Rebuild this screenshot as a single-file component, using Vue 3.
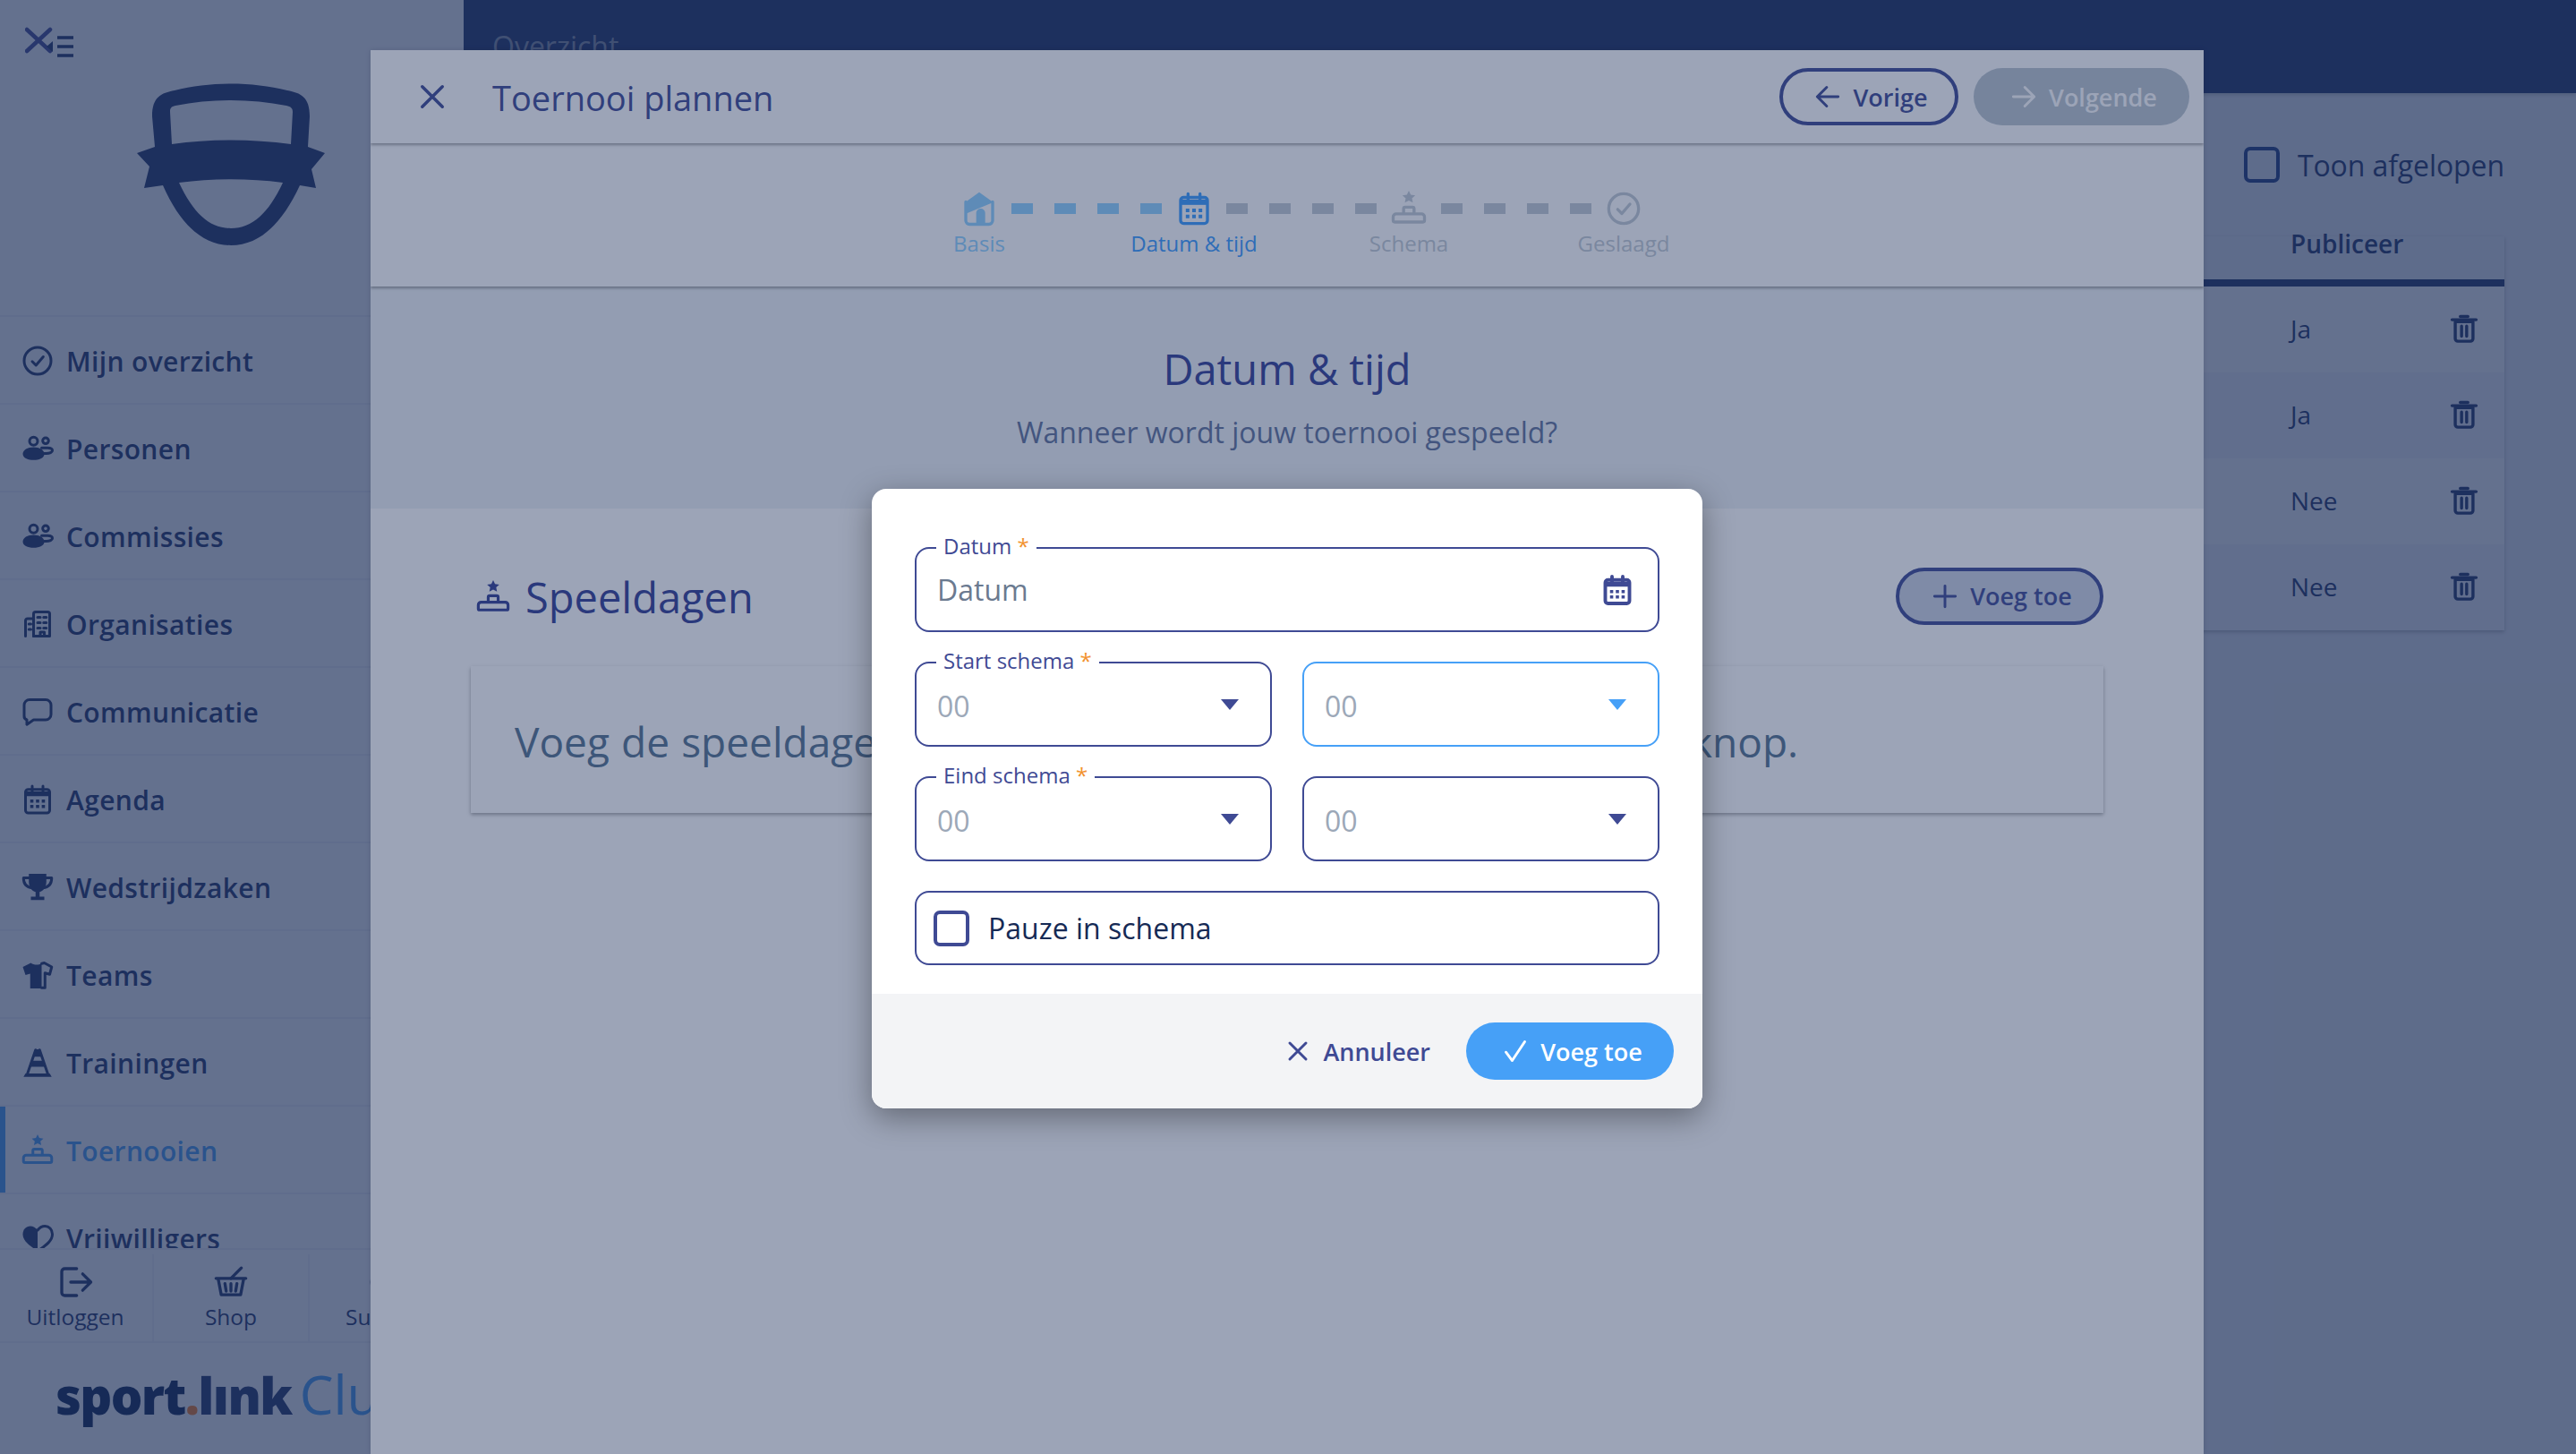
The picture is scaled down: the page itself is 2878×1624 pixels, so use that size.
<template>
  <div class="page">
    <aside class="sidebar">
      <svg class="toggle" viewBox="0 0 60 40" width="60" height="40">
        <path d="M2 3l26 24M2 27L28 3" stroke="#3f4a94" stroke-width="4.5" stroke-linecap="round" fill="none" />
        <path d="M24 22l7-6v12z" fill="#1e3167" />
        <path d="M36 12h18M36 22h18M36 32h18" stroke="#1e3167" stroke-width="3.5" fill="none" />
      </svg>
      <svg class="shield" viewBox="153 93 210 181" width="210" height="181">
        <path
          fill="#1e3167"
          fill-rule="evenodd"
          d="M170 130C170 108 180 104 195 101C235 91 281 91 321 101C336 104 346 108 346 130L344 164L363 171L348 189L353 210L335 207C315 250 290 274 258 274C226 274 201 250 182 207L161 210L167 186L153 171L173 164ZM196 118C191 119 190 121 190 125L192 161C235 155 281 155 325 161L327 125C327 121 325 119 320 118C280 110 236 110 196 118ZM200 204C216 238 234 255 258 255C282 255 300 238 316 204C278 199 238 199 200 204Z"
        />
      </svg>
      <nav class="nav">
        <a v-for="item in navItems" :key="item.label" class="nav-item" :class="{ active: item.active }">
          <Ico :name="item.icon" class="nav-icon" />
          <span>{{ item.label }}</span>
        </a>
      </nav>
      <div class="quick">
        <div v-for="q in quickLinks" :key="q.label" class="quick-cell">
          <Ico :name="q.icon" class="quick-icon" />
          <span>{{ q.label }}</span>
        </div>
      </div>
      <div class="brand">
        <span class="brand-sport">sport</span><span class="brand-dot">.</span><span class="brand-link">lınk</span>
        <span class="brand-club">Club</span>
      </div>
    </aside>

    <main class="main">
      <header class="topbar">Overzicht</header>
      <div class="toolbar">
        <span class="box"></span>
        <span>Toon afgelopen</span>
      </div>
      <div class="table">
        <div class="thead">
          <span>Publiceer</span>
        </div>
        <div v-for="(row, i) in rows" :key="i" class="row">
          <span>{{ row }}</span>
          <Ico name="trash" class="trash" />
        </div>
      </div>
    </main>

    <div class="scrim drawer-wrap">
      <section class="drawer">
        <div class="d-head">
          <Ico name="close" class="d-close" />
          <h1>Toernooi plannen</h1>
          <div class="d-actions">
            <button class="pill outline"><Ico name="left" class="pill-icon" />Vorige</button>
            <button class="pill disabled"><Ico name="right" class="pill-icon" />Volgende</button>
          </div>
        </div>

        <div class="stepper">
          <div class="step-icons">
            <template v-for="(cell, i) in stepCells" :key="i">
              <div class="cell" :class="cell.state">
                <Ico v-if="cell.icon" :name="cell.icon" class="step-icon" />
                <i v-else class="dash"></i>
              </div>
            </template>
          </div>
          <div class="step-labels">
            <span v-for="s in steps" :key="s.label" :class="s.state">{{ s.label }}</span>
          </div>
        </div>

        <div class="intro">
          <h2>Datum &amp; tijd</h2>
          <p>Wanneer wordt jouw toernooi gespeeld?</p>
        </div>

        <div class="content">
          <div class="content-head">
            <h3><Ico name="podium" class="h-icon" />Speeldagen</h3>
            <button class="pill outline tinted"><Ico name="plus" class="pill-icon" />Voeg toe</button>
          </div>
          <div class="empty">Voeg de speeldagen toe door gebruik te maken van de 'plus' knop.</div>
        </div>
      </section>
    </div>

    <div class="scrim modal-wrap">
      <form class="modal" @submit.prevent>
        <div class="modal-body">
          <div class="field">
            <label>Datum <em>*</em></label>
            <span class="placeholder">Datum</span>
            <Ico name="calendar" class="cal" />
          </div>
          <div class="two">
            <div class="field">
              <label>Start schema <em>*</em></label>
              <span class="value">00</span>
              <i class="caret"></i>
            </div>
            <div class="field focus">
              <span class="value">00</span>
              <i class="caret"></i>
            </div>
          </div>
          <div class="two">
            <div class="field">
              <label>Eind schema <em>*</em></label>
              <span class="value">00</span>
              <i class="caret"></i>
            </div>
            <div class="field">
              <span class="value">00</span>
              <i class="caret"></i>
            </div>
          </div>
          <div class="check-field">
            <span class="box"></span>
            <span>Pauze in schema</span>
          </div>
        </div>
        <div class="modal-foot">
          <button class="cancel"><Ico name="close" class="cancel-icon" />Annuleer</button>
          <button class="pill primary"><Ico name="check" class="pill-icon" />Voeg toe</button>
        </div>
      </form>
    </div>
  </div>
</template>

<script setup>
import { h } from 'vue'

/* s = stroked paths, f = filled paths */
const icons = {
  done: { s: ['M12 2a10 10 0 1 0 0 20a10 10 0 1 0 0-20z', 'M8 12.5l2.800 2.800L16.200 9'] },
  people: {
    s: ['M9 3.500a3 3 0 1 0 0 6a3 3 0 1 0 0-6z', 'M18 4a2.200 2.200 0 1 0 0 4.400a2.200 2.200 0 1 0 0-4.400z', 'M15 11.500h4.500c2 0 3.500.8 3.500 2s-2 2.200-4.500 2.200H16'],
    f: ['M1 16c0-3 3.500-5 8-5s8 2 8 5s-3.500 4.500-8 4.500s-8-1.500-8-4.500z']
  },
  building: {
    s: ['M3 21V9.500a1.500 1.500 0 0 1 1.500-1.500H9V21', 'M9 21V4.500A1.500 1.500 0 0 1 10.500 3h9A1.500 1.500 0 0 1 21 4.500V21z', 'M12 7h2M16.500 7h2M12 11h2M16.500 11h2M12 15h2M16.500 15h2M5.500 12h1.500M5.500 16h1.500M14 21v-3h3v3']
  },
  chat: { s: ['M6 3h12a4 4 0 0 1 4 4v7a4 4 0 0 1-4 4H9l-5 3.500V18a3 3 0 0 1-2-3V7a4 4 0 0 1 4-4z'] },
  calendar: {
    s: ['M5 4.500h14a2 2 0 0 1 2 2V20a2 2 0 0 1-2 2H5a2 2 0 0 1-2-2V6.500a2 2 0 0 1 2-2z', 'M8 2v4M16 2v4'],
    f: ['M3 6h18v3.500H3z', 'M6.500 12h2.400v2.400H6.500zM10.800 12h2.400v2.400h-2.400zM15.100 12h2.400v2.400h-2.400zM6.500 16h2.400v2.400H6.500zM10.800 16h2.400v2.400h-2.400zM15.100 16h2.400v2.400h-2.400z']
  },
  trophy: {
    s: ['M6 5H1.500c0 4 2 7 6.500 7.500M18 5h4.500c0 4-2 7-6.500 7.500'],
    f: ['M5.500 2h13v6c0 4-2.500 7-5 7.500V19H17v2.500H7V19h3.500v-3.500c-2.500-.5-5-3.500-5-7.500z']
  },
  shirt: {
    f: ['M7 3L1 6l2 6 3.500-1v11H15V3.500C12 5 9 4.500 7 3z'],
    s: ['M15 3.500L17 3l5.500 3-1.500 5.500-3.500-1V21.500H15']
  },
  cone: {
    f: ['M1.500 22.500L3 20h18l1.500 2.500z', 'M10.500 2h3l2 5.500H8.500z', 'M7.500 10.500h9l1.500 4.500H6z'],
    s: ['M10.500 2.500L4.500 20M13.500 2.500L19.500 20']
  },
  podium: {
    f: ['M12 0l1.300 2.700 3 .4-2.200 2 .6 2.900L12 6.600 9.300 8l.6-2.900-2.200-2 3-.4z'],
    s: ['M8.500 15.500v-3.500a1 1 0 0 1 1-1h5a1 1 0 0 1 1 1v3.500M3.500 15.500h17a2 2 0 0 1 2 2V20a1 1 0 0 1-1 1h-19a1 1 0 0 1-1-1v-2.500a2 2 0 0 1 2-2z']
  },
  heart: {
    f: ['M12 21.500C5 17 1 13.500 1 9c0-3.500 2.500-6 5.500-6c2.200 0 4.200 1.200 5.500 3z'],
    s: ['M12 6c1.300-1.800 3.300-3 5.500-3c3 0 5.500 2.500 5.500 6c0 4.500-4 8-11 12.500']
  },
  logout: { s: ['M13 3H5a2 2 0 0 0-2 2v14a2 2 0 0 0 2 2h8', 'M9 12h13M17 6.500l5.500 5.500-5.500 5.500'] },
  basket: {
    s: ['M2 9.500h20', 'M3.500 10l2 10.500h13l2-10.500', 'M8 13l.8 5M12 13v5M16 13l-.8 5', 'M12 9.500L19 2.500']
  },
  support: { s: ['M12 2a10 10 0 1 0 0 20a10 10 0 1 0 0-20z', 'M9.500 9a2.500 2.500 0 1 1 3.500 2.500c-.7.4-1 .9-1 1.800'], f: ['M11 16h2v2h-2z'] },
  trash: {
    s: ['M5 6.500h14V20a2 2 0 0 1-2 2H7a2 2 0 0 1-2-2z', 'M2.500 5h19', 'M9 2.500h6', 'M10 10v8M14 10v8']
  },
  close: { s: ['M3 3l18 18M21 3L3 21'] },
  left: { s: ['M22 12H3M11 3l-9 9 9 9'] },
  right: { s: ['M2 12h19M13 3l9 9-9 9'] },
  plus: { s: ['M12 2v20M2 12h20'] },
  check: { s: ['M3 13l6 8L21 3'] },
  house: {
    f: ['M12 1l9 6.500v.5L3 15.500V7.500z', 'M10 22.500V15a3 3 0 0 1 6 0v7.500z'],
    s: ['M3 7.500V20a2.500 2.500 0 0 0 2.500 2.500h13A2.500 2.500 0 0 0 21 20V7.500']
  }
}

const Ico = (props) => {
  const def = icons[props.name]
  const kids = [
    ...(def.f || []).map((d) => h('path', { d, fill: 'currentColor', stroke: 'none' })),
    ...(def.s || []).map((d) => h('path', { d, fill: 'none' }))
  ]
  return h(
    'svg',
    { viewBox: '0 0 24 24', stroke: 'currentColor', 'stroke-width': 2, 'stroke-linecap': 'round', 'stroke-linejoin': 'round' },
    kids
  )
}
Ico.props = ['name']

const navItems = [
  { label: 'Mijn overzicht', icon: 'done' },
  { label: 'Personen', icon: 'people' },
  { label: 'Commissies', icon: 'people' },
  { label: 'Organisaties', icon: 'building' },
  { label: 'Communicatie', icon: 'chat' },
  { label: 'Agenda', icon: 'calendar' },
  { label: 'Wedstrijdzaken', icon: 'trophy' },
  { label: 'Teams', icon: 'shirt' },
  { label: 'Trainingen', icon: 'cone' },
  { label: 'Toernooien', icon: 'podium', active: true },
  { label: 'Vrijwilligers', icon: 'heart' }
]

const quickLinks = [
  { label: 'Uitloggen', icon: 'logout' },
  { label: 'Shop', icon: 'basket' },
  { label: 'Support', icon: 'support' }
]

const rows = ['Ja', 'Ja', 'Nee', 'Nee']

const steps = [
  { label: 'Basis', icon: 'house', state: 'done' },
  { label: 'Datum & tijd', icon: 'calendar', state: 'current' },
  { label: 'Schema', icon: 'podium', state: 'todo' },
  { label: 'Geslaagd', icon: 'done', state: 'todo' }
]

// one icon and then four dashes, the last step has no dashes
const stepCells = steps.flatMap((s, i) => {
  const cells = [{ icon: s.icon, state: s.state }]
  if (i < steps.length - 1) {
    const state = s.state === 'done' ? 'done' : 'todo'
    for (let n = 0; n < 4; n++) cells.push({ state })
  }
  return cells
})
</script>

<style>
html, body { margin: 0; height: 100%; overflow: hidden; }
</style>

<style scoped>
.page {
  position: relative;
  display: flex;
  width: 2878px;
  height: 1624px;
  overflow: hidden;
  background: #ebeff4;
  font-family: "Open Sans", "Liberation Sans", sans-serif;
  color: #1e3167;
}

/* sidebar */
.sidebar {
  position: relative;
  width: 518px;
  flex: none;
  display: flex;
  flex-direction: column;
  background: #fff;
  overflow: hidden;
}
.toggle {
  margin: 30px 0 0 28px;
  flex: none;
}
.shield {
  margin: 23px 0 0 153px;
  flex: none;
}
.nav {
  margin-top: 78px;
  height: 1042px;
  flex: none;
  overflow: hidden;
  border-top: 2px solid #f1f3f6;
  box-sizing: border-box;
}
.nav-item {
  position: relative;
  display: flex;
  align-items: center;
  gap: 14px;
  height: 98px;
  box-sizing: border-box;
  padding: 2px 0 0 24px;
  border-bottom: 2px solid #f1f3f6;
  font-size: 30px;
  font-weight: 600;
  letter-spacing: 0.35px;
  color: #1e3167;
}
.nav-item.active {
  color: #47a0f8;
}
.nav-item.active::before {
  content: "";
  position: absolute;
  left: 0;
  top: 0;
  bottom: 0;
  width: 6px;
  background: #47a0f8;
}
.nav-icon {
  width: 36px;
  height: 36px;
  flex: none;
}
.quick {
  display: flex;
  height: 106px;
  flex: none;
  width: 522px;
  margin-left: -2px;
  padding-top: 5px;
  border-top: 2px solid #f1f3f6;
  border-bottom: 2px solid #f1f3f6;
  box-sizing: border-box;
}
.quick-cell {
  width: 172px;
  flex: none;
  display: flex;
  flex-direction: column;
  align-items: center;
  justify-content: center;
  gap: 2px;
  border-right: 2px solid #f1f3f6;
  font-size: 24.5px;
}
.quick-icon {
  width: 40px;
  height: 40px;
}
.brand {
  margin: 21px 0 0 62px;
  white-space: nowrap;
  font-size: 56px;
  line-height: 72px;
  letter-spacing: -1.6px;
}
.brand-sport { font-weight: 800; color: #06214f; }
.brand-dot { font-weight: 800; color: #ff7f20; }
.brand-link { font-weight: 800; color: #1e3167; }
.brand-club { font-size: 60px; color: #47a0f8; margin-left: 9px; letter-spacing: 0; }

/* page behind the drawer */
.main {
  flex: 1;
  min-width: 0;
  display: flex;
  flex-direction: column;
}
.topbar {
  height: 104px;
  flex: none;
  box-sizing: border-box;
  padding: 30px 0 0 32px;
  background: #1e3167;
  color: #8d96aa;
  font-size: 32px;
  line-height: 44px;
  box-shadow: 0 2px 4px rgba(0, 0, 0, .2);
}
.toolbar {
  height: 160px;
  flex: none;
  display: flex;
  align-items: center;
  justify-content: flex-end;
  gap: 20px;
  padding-right: 80px;
  font-size: 32px;
  letter-spacing: -0.1px;
}
.box {
  display: block;
  flex: none;
  width: 40px;
  height: 40px;
  box-sizing: border-box;
  border: 4px solid #1e3d82;
  border-radius: 7px;
}
.table {
  margin-right: 80px;
  box-shadow: 0 2px 4px rgba(0, 0, 0, .25);
}
.thead {
  height: 56px;
  display: grid;
  grid-template-columns: 1fr 239px;
  box-sizing: border-box;
  border-bottom: 8px solid #1e3167;
  background: #ebeff4;
  font-size: 28px;
  font-weight: 600;
  line-height: 16px;
}
.thead span {
  grid-column: 2;
}
.row {
  height: 96px;
  display: grid;
  grid-template-columns: 1fr 181px 26px;
  align-items: center;
  box-sizing: border-box;
  padding: 0 32px 2px 0;
  background: #fff;
  font-size: 28px;
}
.row span { grid-column: 2; }
.row:nth-child(odd) { background: #f4f6fa; }
.trash {
  width: 34px;
  height: 34px;
  margin-left: -4px;
  stroke-width: 2.4;
}

/* overlays */
.scrim {
  position: absolute;
  inset: 0;
  display: flex;
  justify-content: center;
  align-items: flex-start;
  padding-right: 2px;
  background: rgba(30, 48, 90, .44);
}
.drawer-wrap { padding-top: 56px; }
.modal-wrap { padding-top: 546px; }

/* drawer */
.drawer {
  isolation: isolate;
  width: 2048px;
  height: 1568px;
  flex: none;
  background: #fff;
  overflow: hidden;
  box-shadow: 0 0 6px rgba(0, 0, 0, .15);
}
.d-head {
  position: relative;
  z-index: 2;
  height: 104px;
  display: flex;
  align-items: center;
  padding: 0 16px 0 54px;
  background: #fff;
  box-shadow: 0 2px 3px rgba(0, 0, 0, .35);
  color: #3f4b96;
}
.d-close {
  width: 30px;
  height: 30px;
  margin-right: 52px;
  flex: none;
  stroke-width: 2.8;
}
.d-head h1 {
  margin: 2px 0 0;
  font-size: 38px;
  font-weight: 400;
}
.d-actions {
  margin-left: auto;
  display: flex;
  gap: 17px;
}
.pill {
  display: inline-flex;
  align-items: center;
  justify-content: center;
  gap: 14px;
  height: 64px;
  box-sizing: border-box;
  border-radius: 32px;
  border: 4px solid transparent;
  padding: 0 0 0 6px;
  background: none;
  font-family: inherit;
  font-size: 27px;
  font-weight: 600;
}
.pill-icon {
  width: 28px;
  height: 28px;
  flex: none;
  stroke-width: 2.5;
}
.outline {
  width: 200px;
  border-color: #3f4b96;
  color: #3f4b96;
}
.disabled {
  width: 241px;
  background: #bbc6cf;
  color: #fff;
}
.tinted {
  width: 232px;
  background: #cbd3e3;
}
.primary {
  width: 232px;
  background: #46a0f7;
  color: #fff;
}

/* stepper */
.stepper {
  position: relative;
  z-index: 1;
  height: 160px;
  box-sizing: border-box;
  padding: 53px 0 0 32px;
  background: #fff;
  box-shadow: 0 2px 3px rgba(0, 0, 0, .35);
}
.step-icons {
  display: flex;
  justify-content: center;
}
.cell {
  width: 48px;
  height: 40px;
  display: flex;
  align-items: center;
  justify-content: center;
}
.dash {
  display: block;
  width: 24px;
  height: 12px;
  background: currentColor;
}
.step-icon {
  width: 40px;
  height: 40px;
  flex: none;
}
.step-labels {
  display: flex;
  justify-content: center;
  margin-top: 3px;
  font-size: 24px;
  line-height: 32px;
}
.step-labels span {
  width: 240px;
  text-align: center;
}
.done { color: #91d2ff; }
.current { color: #3c9dff; }
.todo { color: #c3ccd4; }

/* intro */
.intro {
  height: 248px;
  box-sizing: border-box;
  padding-top: 65px;
  background: #eff3f6;
  text-align: center;
}
.intro h2 {
  margin: 0;
  font-size: 47px;
  line-height: 54px;
  font-weight: 500;
  color: #354096;
}
.intro p {
  margin: 22px 0 0;
  font-size: 32px;
  line-height: 44px;
  color: #60729b;
}

/* content */
.content {
  padding: 65px 112px 0;
}
.content-head {
  display: flex;
  align-items: center;
  justify-content: space-between;
  height: 65px;
  margin-bottom: 46px;
}
.content-head h3 {
  display: flex;
  align-items: center;
  gap: 17px;
  margin: 2px 0 0 6px;
  font-size: 47px;
  font-weight: 500;
  color: #354096;
}
.h-icon {
  width: 38px;
  height: 38px;
}
.empty {
  height: 164px;
  box-sizing: border-box;
  padding: 54px 0 0 49px;
  background: #fff;
  box-shadow: 0 2px 4px rgba(0, 0, 0, .35);
  font-size: 46px;
  line-height: 60px;
  word-spacing: 1.2px;
  white-space: nowrap;
  color: #567491;
}

/* modal */
.modal {
  width: 928px;
  height: 692px;
  flex: none;
  display: flex;
  flex-direction: column;
  border-radius: 16px;
  overflow: hidden;
  background: #fff;
  box-shadow: 0 10px 34px rgba(0, 0, 0, .36);
}
.modal-body {
  height: 564px;
  flex: none;
  box-sizing: border-box;
  padding: 65px 48px 0;
}
.field {
  position: relative;
  height: 95px;
  box-sizing: border-box;
  display: flex;
  align-items: center;
  justify-content: space-between;
  padding: 0 24px 0 23px;
  border: 2.5px solid #3f4a94;
  border-radius: 16px;
}
.field label {
  position: absolute;
  left: 22px;
  top: -18px;
  padding: 0 8px;
  background: #fff;
  font-size: 24px;
  line-height: 30px;
  color: #3f4a94;
}
.field em {
  color: #f2922e;
  font-style: normal;
}
.placeholder {
  font-size: 32px;
  color: #6b7a90;
}
.value {
  margin-top: 4px;
  font-size: 32px;
  color: #9ca8b8;
}
.cal {
  width: 36px;
  height: 36px;
  color: #3f4a94;
  margin-right: 3px;
  stroke-width: 2.6;
}
.caret {
  width: 0;
  height: 0;
  margin-right: 11px;
  border-left: 10.5px solid transparent;
  border-right: 10.5px solid transparent;
  border-top: 12px solid #3f4a94;
}
.focus { border-color: #46a0f7; }
.focus .caret { border-top-color: #46a0f7; }
.two {
  display: grid;
  grid-template-columns: 1fr 1fr;
  gap: 34px;
  margin-top: 33px;
}
.check-field {
  display: flex;
  align-items: center;
  gap: 21px;
  height: 83px;
  box-sizing: border-box;
  margin-top: 33px;
  padding-left: 19px;
  border: 2.5px solid #3f4a94;
  border-radius: 16px;
  font-size: 32px;
  color: #162a55;
}
.check-field .box { border-color: #3f4a94; }
.modal-foot {
  flex: 1;
  display: flex;
  align-items: center;
  justify-content: flex-end;
  gap: 40px;
  padding: 0 32px;
  background: #f3f4f6;
}
.cancel {
  display: flex;
  align-items: center;
  gap: 16px;
  border: 0;
  background: none;
  padding: 0;
  font-family: inherit;
  font-size: 27px;
  font-weight: 600;
  color: #3f4a94;
}
.cancel-icon {
  width: 24px;
  height: 24px;
  stroke-width: 3;
}
</style>
